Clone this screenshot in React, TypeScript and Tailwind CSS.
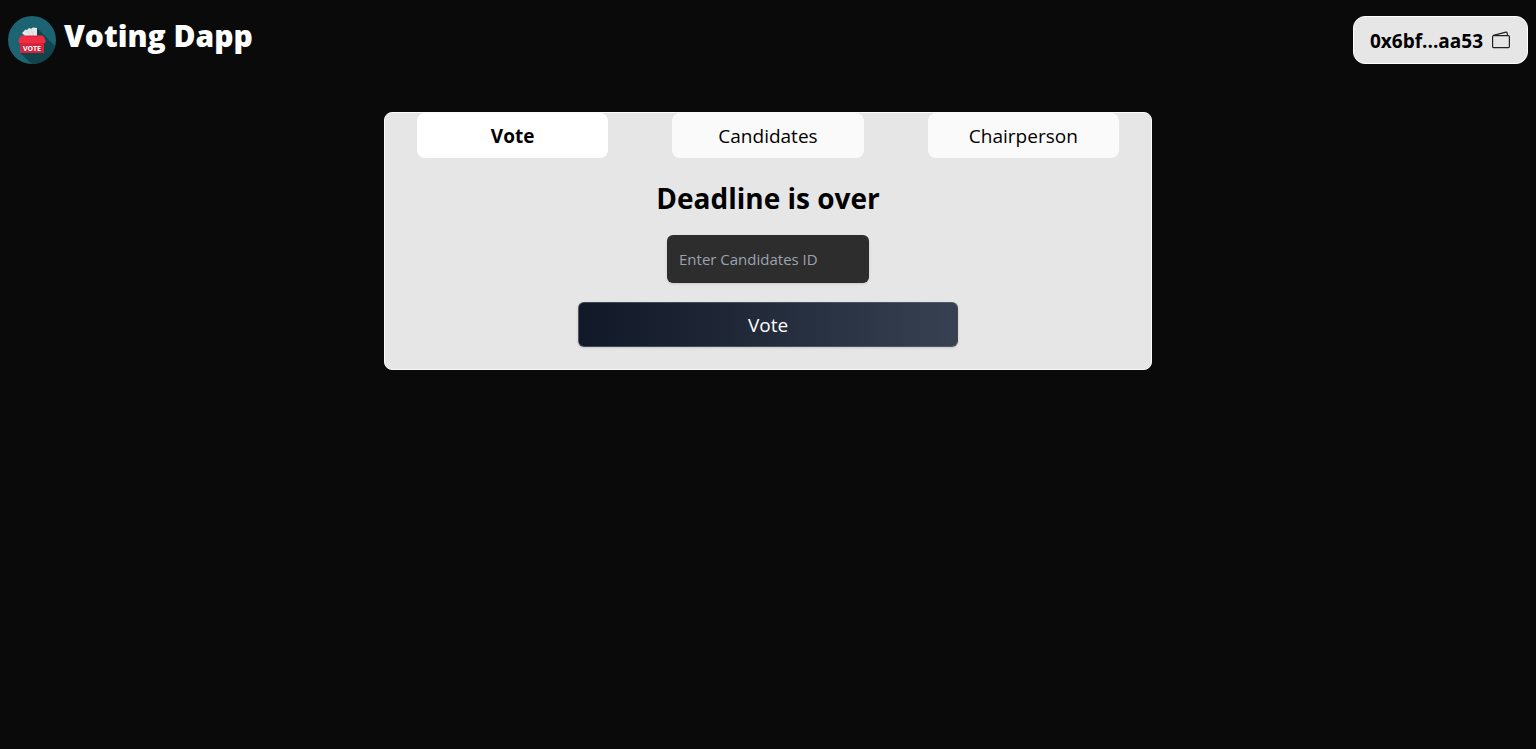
import { useState } from "react";

const tabs = ["Vote", "Candidates", "Chairperson"];

function Logo() {
  return (
    <svg viewBox="0 0 48 48" className="size-12 shrink-0" aria-hidden="true">
      <defs>
        <clipPath id="disc">
          <circle cx="24" cy="24" r="24" />
        </clipPath>
      </defs>
      <circle cx="24" cy="24" r="24" fill="#1c6471" />
      <path d="M29 12 48 31 V48 H24 L12 37 Z" fill="#12444d" clipPath="url(#disc)" />
      <path d="M14 17 17.500 13.500 19 14 21 12 23 12.800 25 11.500 29 12 V21 H18 Z" fill="#e3e6ea" />
      <path d="M19 14.500 23.500 21 M23 13.200 26 21" stroke="#c3c8cf" strokeWidth=".5" fill="none" />
      <path d="M14 19.500 H34 Q35 19.500 35.500 20.500 L37.500 24 V26 Q37.500 27 36.500 27 H11.500 Q10.500 27 10.500 26 V24 L12.500 20.500 Q13 19.500 14 19.500 Z" fill="#f02c44" />
      <path d="M18 20.500 H30" stroke="#d32439" strokeWidth="1" />
      <rect x="12" y="27" width="24" height="10" fill="#d32439" />
      <text x="24" y="34.500" textAnchor="middle" fill="#fff" fontSize="7" fontWeight="700" fontFamily="'Open Sans', sans-serif">
        VOTE
      </text>
    </svg>
  );
}

function WalletIcon() {
  return (
    <svg viewBox="0 0 20 20" className="size-5" fill="none" stroke="#222" strokeWidth="1.2" strokeLinejoin="round" aria-hidden="true">
      <rect x="1.600" y="4.600" width="16.800" height="12" rx="1" />
      <path d="M2.200 4.400 15 1.200 Q15.900 1 16.100 1.800 L16.600 4.400" />
    </svg>
  );
}

export default function App() {
  const [active, setActive] = useState("Vote");
  return (
    <div className="min-h-screen bg-[#0a0a0a] font-['Open_Sans','Noto_Sans',sans-serif] text-black">
      <header className="flex items-start justify-between px-2 pt-4">
        <div className="flex gap-2">
          <Logo />
          <h1 className="text-[30px] leading-10 font-extrabold text-white">Voting Dapp</h1>
        </div>
        <button className="flex h-12 items-center gap-2 rounded-xl border border-white bg-[#e6e6e6] px-4 pt-0.5 text-[19px] font-bold">
          0x6bf...aa53
          <WalletIcon />
        </button>
      </header>
      <main className="mx-auto mt-12 flex w-1/2 flex-col items-center rounded-lg border border-[#fafafa] bg-[#e6e6e6] pb-[22px]">
        <nav className="flex w-full justify-around">
          {tabs.map((tab) => (
            <button
              key={tab}
              onClick={() => setActive(tab)}
              className={
                tab === active
                  ? "h-[45px] w-1/4 rounded-lg bg-white pt-0.5 text-[19px] font-bold"
                  : "h-[45px] w-1/4 rounded-lg bg-[#fafafa] pt-0.5 text-[19px] font-medium"
              }
            >
              {tab}
            </button>
          ))}
        </nav>
        <h2 className="mt-5 text-[28px] leading-10 font-bold">Deadline is over</h2>
        <input
          type="text"
          aria-label="Candidates ID"
          placeholder="Enter Candidates ID"
          className="mt-[17px] h-12 w-[202px] rounded-md bg-[#2d2d2d] px-3 text-[15px] text-white shadow-sm placeholder:text-[#9ca3af]"
        />
        <button className="mt-[19px] h-[45px] w-[380px] rounded-md border border-[#6b7280]/50 bg-linear-to-r from-[#111827] to-[#374151] pt-0.5 text-[19px] font-medium text-white shadow-sm">
          Vote
        </button>
      </main>
    </div>
  );
}
